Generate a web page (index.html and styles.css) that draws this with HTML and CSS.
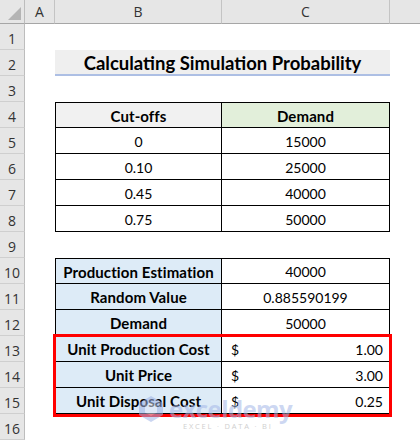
FILE: index.html
```html
<!DOCTYPE html>
<html>
<head>
<meta charset="utf-8">
<link rel="stylesheet" href="styles.css">
</head>
<body>
<div class="sheet">
  <div class="grid">
    <div class="corner"><span class="tri"></span></div>
    <div class="colhdr">A</div>
    <div class="colhdr">B</div>
    <div class="colhdr">C</div>
    <div class="colhdr last"></div>

    <div class="rowhdr">1</div><div></div><div></div><div></div><div></div>

    <div class="rowhdr">2</div><div></div>
    <div class="title">Calculating Simulation Probability</div>
    <div></div>

    <div class="rowhdr">3</div><div></div><div></div><div></div><div></div>

    <div class="rowhdr">4</div><div></div>
    <div class="cell top left hgray bold">Cut-offs</div>
    <div class="cell top hgreen bold">Demand</div>
    <div></div>

    <div class="rowhdr">5</div><div></div>
    <div class="cell left">0</div><div class="cell">15000</div><div></div>
    <div class="rowhdr">6</div><div></div>
    <div class="cell left">0.10</div><div class="cell">25000</div><div></div>
    <div class="rowhdr">7</div><div></div>
    <div class="cell left">0.45</div><div class="cell">40000</div><div></div>
    <div class="rowhdr">8</div><div></div>
    <div class="cell left">0.75</div><div class="cell">50000</div><div></div>

    <div class="rowhdr">9</div><div></div><div></div><div></div><div></div>

    <div class="rowhdr">10</div><div></div>
    <div class="cell top left blue bold">Production Estimation</div>
    <div class="cell top">40000</div><div></div>
    <div class="rowhdr">11</div><div></div>
    <div class="cell left blue bold">Random Value</div>
    <div class="cell">0.885590199</div><div></div>
    <div class="rowhdr">12</div><div></div>
    <div class="cell left blue bold">Demand</div>
    <div class="cell">50000</div><div></div>
    <div class="rowhdr">13</div><div></div>
    <div class="cell left blue bold">Unit Production Cost</div>
    <div class="cell money"><span>$</span><span>1.00</span></div><div></div>
    <div class="rowhdr">14</div><div></div>
    <div class="cell left blue bold">Unit Price</div>
    <div class="cell money"><span>$</span><span>3.00</span></div><div></div>
    <div class="rowhdr">15</div><div></div>
    <div class="cell left blue bold">Unit Disposal Cost</div>
    <div class="cell money"><span>$</span><span>0.25</span></div><div></div>

    <div class="rowhdr">16</div><div></div><div></div><div></div><div></div>
  </div>

  <div class="redbox"></div>

  <div class="watermark">
    <div class="wm-top">
      <svg class="wm-icon" width="26" height="28" viewBox="0 0 26 28">
        <path d="M13 1 L25 8 L25 20 L13 27 L1 20 L1 8 Z" fill="#9fb3e6"/>
        <path d="M13 7 L19 10.5 L19 17.5 L13 21 L7 17.5 L7 10.5 Z" fill="#dfe6f7"/>
      </svg>
      <span class="wm-text">exceldemy</span>
    </div>
    <div class="wm-sub">EXCEL · DATA · BI</div>
  </div>
</div>
</body>
</html>
```

FILE: styles.css
```css
html, body {
  margin: 0;
  padding: 0;
  background: #ffffff;
}

.sheet {
  position: relative;
  width: 420px;
  height: 443px;
  overflow: hidden;
  font-family: Lato, "Open Sans", sans-serif;
  color: #000;
}

.grid {
  display: grid;
  grid-template-columns: 25px 30px 167px 168px 1fr;
  grid-template-rows: 24px;
  grid-auto-rows: 26px;
}

.corner {
  position: relative;
  background: #e6e6e6;
  border-right: 1px solid #bdbdbd;
  border-bottom: 1px solid #a6a6a6;
}

.tri {
  position: absolute;
  right: 3px;
  bottom: 3px;
  width: 0;
  height: 0;
  border-left: 13px solid transparent;
  border-bottom: 13px solid #b4b4b4;
}

.colhdr {
  background: #e6e6e6;
  border-bottom: 1px solid #a6a6a6;
  border-right: 1px solid #c4c4c4;
  display: flex;
  align-items: center;
  justify-content: center;
  font-size: 14px;
  color: #333;
  font-family: "Open Sans", sans-serif;
}

.colhdr.last {
  border-right: none;
}

.rowhdr {
  background: #e6e6e6;
  border-right: 1px solid #bdbdbd;
  border-bottom: 1px solid #cfcfcf;
  display: flex;
  align-items: flex-end;
  justify-content: center;
  padding-bottom: 1px;
  box-sizing: border-box;
  font-size: 14px;
  color: #333;
  font-family: "Open Sans", sans-serif;
}

.title {
  grid-column: 3 / span 2;
  background: #efefef;
  border-bottom: 2px solid #adbfe4;
  display: flex;
  align-items: center;
  justify-content: center;
  font-weight: 700;
  font-size: 18.5px;
  padding-top: 2px;
  box-sizing: border-box;
}

.cell {
  box-sizing: border-box;
  border-right: 1px solid #000;
  border-bottom: 1px solid #000;
  display: flex;
  align-items: center;
  justify-content: center;
  font-size: 14px;
  padding-top: 1px;
  background: #fff;
}

.cell.top { border-top: 1px solid #000; }
.cell.left { border-left: 1px solid #000; }
.cell.bold { font-weight: 700; font-size: 15px; letter-spacing: 0.1px; }
.hgray { background: #f1f1f1; }
.hgreen { background: #e2efda; }
.blue { background: #ddebf7; }

.cell.money {
  justify-content: space-between;
  padding: 1px 6px 0 9px;
}

.redbox {
  position: absolute;
  left: 53px;
  top: 334px;
  width: 339px;
  height: 83px;
  box-sizing: border-box;
  border: 3px solid #ff0000;
}

.watermark {
  position: absolute;
  left: 138px;
  top: 395px;
  width: 150px;
  opacity: 0.55;
  display: flex;
  flex-direction: column;
  align-items: flex-start;
}

.wm-top {
  display: flex;
  align-items: center;
  gap: 5px;
}

.wm-text {
  font-family: "Open Sans", sans-serif;
  font-weight: 700;
  font-size: 24px;
  line-height: 26px;
  color: #a5b8e8;
  letter-spacing: -0.6px;
}

.wm-sub {
  margin-top: -2px;
  margin-left: 45px;
  font-family: "Open Sans", sans-serif;
  font-size: 7.5px;
  letter-spacing: 1.8px;
  color: #a9a9a9;
}
```
